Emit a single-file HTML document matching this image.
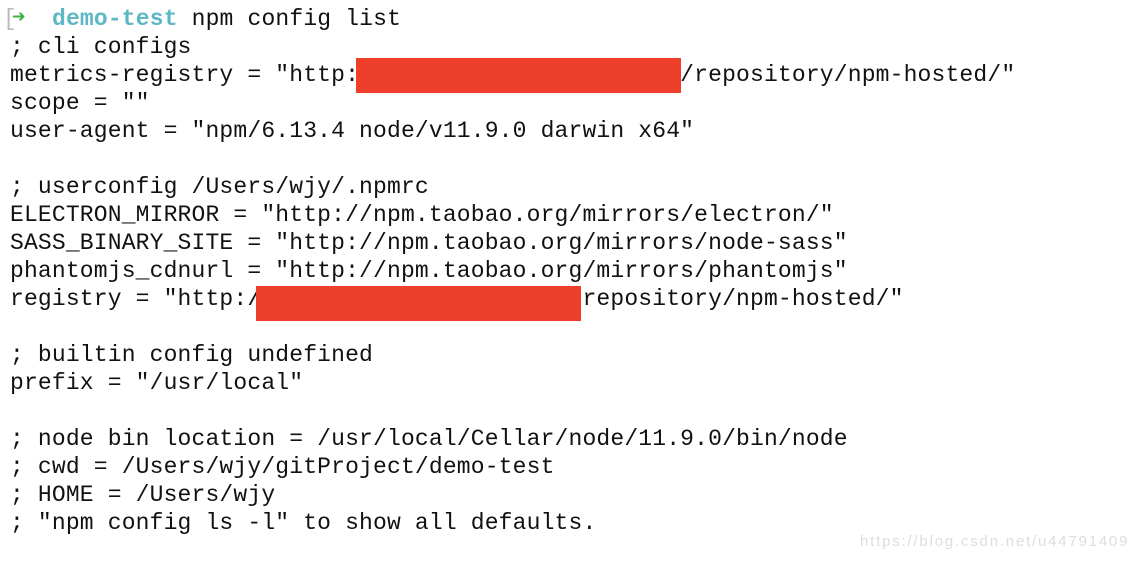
<!DOCTYPE html>
<html><head><meta charset="utf-8"><style>
body{margin:0;width:1140px;height:564px;background:#fff;overflow:hidden;position:relative;font-family:"Liberation Mono","DejaVu Sans Mono",monospace;font-size:23px;letter-spacing:0.16px;color:#111}
.l{position:absolute;left:10px;height:28px;line-height:28px;white-space:pre}
.r{position:absolute;background:#ee3f2a;height:35px;width:325px}
.wm{position:absolute;left:860px;top:533px;font-family:"Liberation Sans",sans-serif;font-size:15px;letter-spacing:1.8px;color:#ddd;white-space:pre}
</style></head><body>
<div class="l" style="top:5px;left:3px;color:#bbb">[</div>
<div class="l" style="top:5px;left:12px;color:#3fb23f;font-weight:bold;font-size:22px">➜</div>
<div class="l" style="top:5px;left:52px"><span style="color:#5bb8c4;font-weight:bold">demo-test</span> npm config list</div>
<div class="l" style="top:33px">; cli configs</div>
<div class="l" style="top:61px">metrics-registry = "http:                       /repository/npm-hosted/"</div>
<div class="l" style="top:89px">scope = ""</div>
<div class="l" style="top:117px">user-agent = "npm/6.13.4 node/v11.9.0 darwin x64"</div>
<div class="l" style="top:173px">; userconfig /Users/wjy/.npmrc</div>
<div class="l" style="top:201px">ELECTRON_MIRROR = "http://npm.taobao.org/mirrors/electron/"</div>
<div class="l" style="top:229px">SASS_BINARY_SITE = "http://npm.taobao.org/mirrors/node-sass"</div>
<div class="l" style="top:257px">phantomjs_cdnurl = "http://npm.taobao.org/mirrors/phantomjs"</div>
<div class="l" style="top:285px">registry = "http:/                       repository/npm-hosted/"</div>
<div class="l" style="top:341px">; builtin config undefined</div>
<div class="l" style="top:369px">prefix = "/usr/local"</div>
<div class="l" style="top:425px">; node bin location = /usr/local/Cellar/node/11.9.0/bin/node</div>
<div class="l" style="top:453px">; cwd = /Users/wjy/gitProject/demo-test</div>
<div class="l" style="top:481px">; HOME = /Users/wjy</div>
<div class="l" style="top:509px">; "npm config ls -l" to show all defaults.</div>
<div class="r" style="left:356px;top:58px"></div>
<div class="r" style="left:256px;top:286px"></div>
<div class="wm">https://blog.csdn.net/u44791409</div>
</body></html>
